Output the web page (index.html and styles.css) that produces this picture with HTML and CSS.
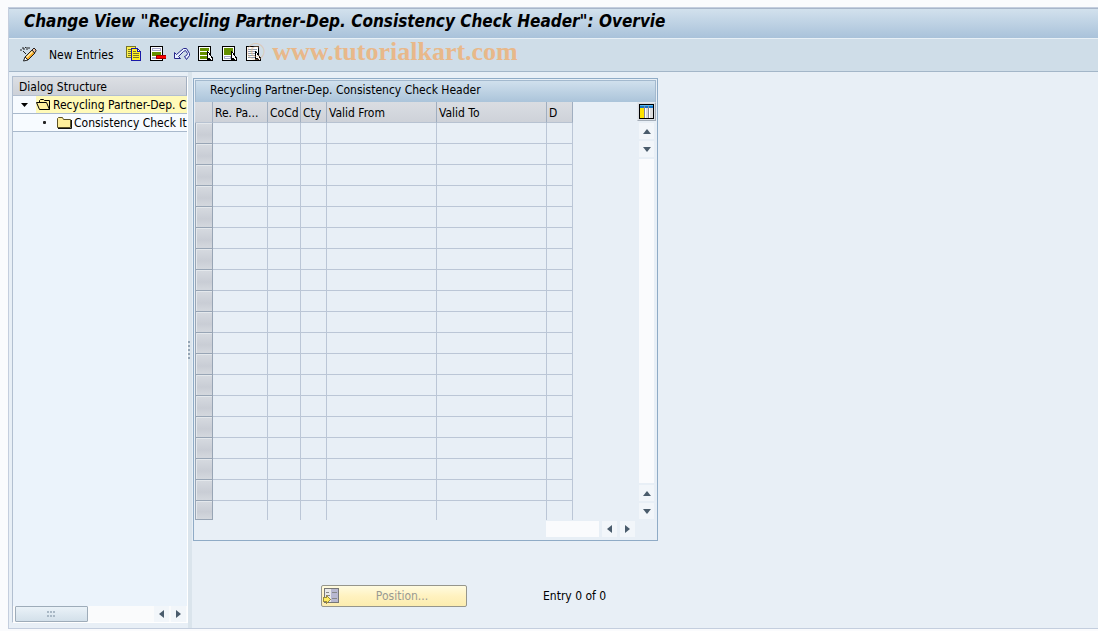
FILE: index.html
```html
<!DOCTYPE html>
<html lang="en">
<head>
  <meta charset="UTF-8">
  <meta name="viewport" content="width=device-width, initial-scale=1">
  <title>Change View</title>
  <link rel="stylesheet" href="styles.css">
</head>
<body>

<div class="window">
  <h1 class="title">Change View "Recycling Partner-Dep. Consistency Check Header": Overvie</h1>

  <div class="toolbar">
    <button type="button" class="tool" aria-label="Display / Change">
      <svg width="17" height="16" viewBox="0 0 17 16">
        <path d="M1 5V3M2 2h2v2M5 2l1-1M7 1v3M9 1v2M3 5l3 3" fill="none" stroke="#222"/>
        <path d="M5 11l7-7 3 3-7 7z" fill="#f7a823" stroke="#222"/>
        <path d="M6.500 11.500L13 5" stroke="#ffeeb0" stroke-width="1.500"/>
        <path d="M12 4l2-2 2 2v1l-1.500 2z" fill="#f4c0a0" stroke="#222"/>
        <path d="M3.500 15l1.500-4 3 3z" fill="#fff" stroke="#222"/>
      </svg>
    </button>
    <button type="button" class="tool-text">New Entries</button>
    <button type="button" class="tool" aria-label="Copy As">
      <svg width="16" height="16" viewBox="0 0 16 16" shape-rendering="crispEdges">
        <path d="M.5.5h9v11h-9z" fill="#fff14a" stroke="#77752a"/>
        <path d="M2 3.500h3M2 5.500h3M2 7.500h3M2 9.500h3" stroke="#77752a"/>
        <path d="M5.500 2.500h6l3 3v9h-9z" fill="#fff020" stroke="#1a1aa8"/>
        <path d="M11.500 2.500v3h3z" fill="#fff" stroke="#1a1aa8"/>
        <path d="M7 5.500h3M7 7.500h6M7 9.500h6M7 11.500h6" stroke="#77752a"/>
      </svg>
    </button>
    <button type="button" class="tool" aria-label="Delete">
      <svg width="16" height="16" viewBox="0 0 16 16" shape-rendering="crispEdges">
        <path d="M.5.5h12v14H.5z" fill="#fff" stroke="#000"/>
        <path d="M2.500 2.500h8v2h-8zM2.500 11.500h7v1h-7z" fill="#fff" stroke="#a8a8cc"/>
        <path d="M2 6h9v4H2z" fill="#659000"/>
        <path d="M6 9h10v4H6z" fill="#a00000"/>
        <path d="M7 10h9v2H7z" fill="#f00"/>
      </svg>
    </button>
    <button type="button" class="tool" aria-label="Undo">
      <svg width="16" height="16" viewBox="0 0 16 16">
        <path d="M.5 6.500v6h6l-2-2 5-5 2-1 2 3-1 2-2 1 2 3 3-4v-2l-3-5h-3l-7 6z" fill="#e8f0ff" stroke="#26268c"/>
      </svg>
    </button>
    <button type="button" class="tool" aria-label="Select All">
      <svg width="16" height="16" viewBox="0 0 16 16" shape-rendering="crispEdges">
        <path d="M.5.5h12v14H.5z" fill="#fff" stroke="#000"/>
        <path d="M2 2h9v3H2zM2 6h9v3H2zM2 10h9v3H2z" fill="#659000"/>
        <path d="M9.500 5.500v8l2-1 1 2h2v-2l-1-1h1z" fill="#fff" stroke="#000"/>
      </svg>
    </button>
    <button type="button" class="tool" aria-label="Select Block">
      <svg width="16" height="16" viewBox="0 0 16 16" shape-rendering="crispEdges">
        <path d="M.5.5h12v14H.5z" fill="#fff" stroke="#000"/>
        <path d="M2 2h9v7H2z" fill="#659000"/>
        <path d="M2.500 10.500h6v2h-6z" fill="#fff" stroke="#a8a8cc"/>
        <path d="M9.500 5.500v8l2-1 1 2h2v-2l-1-1h1z" fill="#fff" stroke="#000"/>
      </svg>
    </button>
    <button type="button" class="tool" aria-label="Deselect All">
      <svg width="16" height="16" viewBox="0 0 16 16" shape-rendering="crispEdges">
        <path d="M.5.5h12v14H.5z" fill="#fff" stroke="#000"/>
        <path d="M2 3.500h9M2 5.500h9M2 7.500h9M2 9.500h7M2 11.500h7" stroke="#8d9fb0"/>
        <path d="M9.500 5.500v8l2-1 1 2h2v-2l-1-1h1z" fill="#fff" stroke="#000"/>
      </svg>
    </button>
    <span class="watermark"><span class="mark">©</span> www.tutorialkart.com</span>
  </div>

  <div class="content">
    <div class="tree">
      <div class="tree-head">Dialog Structure</div>
      <div class="tree-row">
        <svg class="twisty" width="7" height="4" viewBox="0 0 7 4"><path d="M0 0h7L3.500 4z"/></svg>
        <a href="#" class="node current">
          <svg width="15" height="13" viewBox="0 0 15 13">
            <path d="M3.500 4.500V2.500l1-1h3l1 1h5v9h-10l-3-7h10l3 7" fill="#ffef9c" stroke="#000"/>
          </svg>Recycling Partner-Dep. C</a>
      </div>
      <div class="tree-row">
        <span class="dot"></span>
        <a href="#" class="node child">
          <svg width="15" height="13" viewBox="0 0 15 13">
            <path d="M.5 11.500v-9l1-1h4l1 2h7v8z" fill="#ffef9c" stroke="#5c5226"/>
            <path d="M14.500 4v8.500H1" fill="none" stroke="#111"/>
          </svg>Consistency Check It</a>
      </div>
      <div class="tree-scroll">
        <span class="thumb"><i></i><i></i><i></i><i></i><i></i><i></i></span>
        <button type="button" class="arrow" aria-label="Scroll left"><svg width="5" height="8" viewBox="0 0 5 8"><path d="M5 0v8L0 4z"/></svg></button>
        <button type="button" class="arrow" aria-label="Scroll right"><svg width="5" height="8" viewBox="0 0 5 8"><path d="M0 0v8l5-4z"/></svg></button>
      </div>
    </div>

    <div class="splitter"><i></i><i></i><i></i><i></i><i></i></div>

    <div class="main">
      <div class="panel">
        <h2>Recycling Partner-Dep. Consistency Check Header</h2>
        <div class="grid">
          <table>
            <colgroup>
              <col class="c-sel"><col class="c-part"><col class="c-co"><col class="c-cty"><col class="c-date"><col class="c-date"><col class="c-d">
            </colgroup>
            <thead>
              <tr><th></th><th>Re. Pa...</th><th>CoCd</th><th>Cty</th><th>Valid From</th><th>Valid To</th><th>D</th></tr>
            </thead>
            <tbody>
              <tr><td></td><td></td><td></td><td></td><td></td><td></td><td></td></tr>
              <tr><td></td><td></td><td></td><td></td><td></td><td></td><td></td></tr>
              <tr><td></td><td></td><td></td><td></td><td></td><td></td><td></td></tr>
              <tr><td></td><td></td><td></td><td></td><td></td><td></td><td></td></tr>
              <tr><td></td><td></td><td></td><td></td><td></td><td></td><td></td></tr>
              <tr><td></td><td></td><td></td><td></td><td></td><td></td><td></td></tr>
              <tr><td></td><td></td><td></td><td></td><td></td><td></td><td></td></tr>
              <tr><td></td><td></td><td></td><td></td><td></td><td></td><td></td></tr>
              <tr><td></td><td></td><td></td><td></td><td></td><td></td><td></td></tr>
              <tr><td></td><td></td><td></td><td></td><td></td><td></td><td></td></tr>
              <tr><td></td><td></td><td></td><td></td><td></td><td></td><td></td></tr>
              <tr><td></td><td></td><td></td><td></td><td></td><td></td><td></td></tr>
              <tr><td></td><td></td><td></td><td></td><td></td><td></td><td></td></tr>
              <tr><td></td><td></td><td></td><td></td><td></td><td></td><td></td></tr>
              <tr><td></td><td></td><td></td><td></td><td></td><td></td><td></td></tr>
              <tr><td></td><td></td><td></td><td></td><td></td><td></td><td></td></tr>
              <tr><td></td><td></td><td></td><td></td><td></td><td></td><td></td></tr>
              <tr><td></td><td></td><td></td><td></td><td></td><td></td><td></td></tr>
              <tr><td></td><td></td><td></td><td></td><td></td><td></td><td></td></tr>
            </tbody>
          </table>
          <div class="vscroll">
            <button type="button" class="config" aria-label="Configuration">
              <svg width="15" height="15" viewBox="0 0 15 15" shape-rendering="crispEdges">
                <path d="M0 0h15v15H0z"/>
                <path d="M1 1h13v13H1z" fill="#fff"/>
                <path d="M1 1h13v3H1z" fill="#1874c8"/>
                <path d="M1 1h13v1H1z" fill="#58b8f0"/>
                <path d="M1 4h4v10H1z" fill="#ffe400"/>
                <path d="M7 4h2v10H7zM11 4h3v10h-3z" fill="#dcdcdc"/>
                <path d="M5 2h1v12H5zM9 2h1v12H9z" fill="#889"/>
              </svg>
            </button>
            <button type="button" class="arrow" aria-label="Top"><svg width="8" height="5" viewBox="0 0 8 5"><path d="M0 5h8L4 0z"/></svg></button>
            <button type="button" class="arrow" aria-label="Down"><svg width="8" height="5" viewBox="0 0 8 5"><path d="M0 0h8L4 5z"/></svg></button>
            <span class="track"></span>
            <button type="button" class="arrow" aria-label="Up"><svg width="8" height="5" viewBox="0 0 8 5"><path d="M0 5h8L4 0z"/></svg></button>
            <button type="button" class="arrow" aria-label="Bottom"><svg width="8" height="5" viewBox="0 0 8 5"><path d="M0 0h8L4 5z"/></svg></button>
          </div>
        </div>
        <div class="hscroll">
          <span class="track"></span>
          <button type="button" class="arrow" aria-label="Left"><svg width="5" height="8" viewBox="0 0 5 8"><path d="M5 0v8L0 4z"/></svg></button>
          <button type="button" class="arrow" aria-label="Right"><svg width="5" height="8" viewBox="0 0 5 8"><path d="M0 0v8l5-4z"/></svg></button>
        </div>
      </div>

      <div class="footer">
        <button type="button" class="position" disabled>
          <svg width="16" height="16" viewBox="0 0 16 16" shape-rendering="crispEdges">
            <path d="M1.500.5h14v14h-14z" fill="#e8e8e8" stroke="#777"/>
            <path d="M8 1h7v13H8z" fill="#b8b8d0"/>
            <path d="M3 4.500h3M4 7.500h3M9 4.500h5M9 10.500h5" stroke="#888"/>
            <path d="M.5 9.500h3v-2l4 4-4 4v-2h-3z" fill="#ffec60" stroke="#998b40"/>
          </svg>
          <span>Position...</span>
        </button>
        <span class="entry">Entry 0 of 0</span>
      </div>
    </div>
  </div>
</div>

</body>
</html>
```
FILE: styles.css
```css
* { box-sizing: border-box; }
body {
  margin: 0;
  padding: 7px 0 2px 8px;
  min-height: 100vh;
  display: flex;
  flex-direction: column;
  background: #fafbfd;
  color: #000;
  font-family: Tahoma, "DejaVu Sans Condensed", "DejaVu Sans", sans-serif;
  font-size: 12px;
}
button {
  margin: 0;
  padding: 0;
  border: 0;
  background: none;
  font: inherit;
  color: inherit;
}
svg { display: block; flex: none; }

.window {
  flex: 1;
  display: flex;
  flex-direction: column;
  background: #e8eff6;
  border: 1px solid #c4cede;
  border-right: 0;
}
.title {
  margin: 0;
  height: 31px;
  padding-left: 15px;
  border-top: 1px solid #a8b6ca;
  border-bottom: 1px solid #e8f0f6;
  background: linear-gradient(#d2e1ed, #a9c2da);
  font-size: 17px;
  line-height: 25px;
  font-style: italic;
  white-space: nowrap;
  overflow: hidden;
}
.toolbar {
  position: relative;
  display: flex;
  align-items: center;
  gap: 8px;
  height: 33px;
  padding: 0 0 2px 11px;
  background: #cfdde8;
  border-bottom: 1px solid #a3b6c8;
}
.tool-text { margin: 0 4px; padding-top: 1px; }
.watermark {
  position: absolute;
  left: 237px;
  top: 0;
  color: #e8b88a;
  font: bold 26px/26px "Liberation Serif", serif;
  white-space: nowrap;
  pointer-events: none;
}
.mark { font-weight: normal; opacity: 0.5; }

.content { flex: 1; display: flex; }

/* left tree */
.tree {
  width: 176px;
  margin: 4px 0 5px 3px;
  display: flex;
  flex-direction: column;
  background: #ebf3fb;
  border: 1px solid #b2bfd0;
  border-right-color: #fff;
  border-bottom-color: #fff;
}
.tree-head {
  height: 19px;
  padding-left: 6px;
  line-height: 20px;
  background: linear-gradient(#dcdfe4, #cdd1d8);
  border-right: 1px solid #a3afc0;
  border-bottom: 1px solid #b2bfd0;
}
.tree-row {
  display: flex;
  align-items: center;
  height: 18px;
  background: #f7fbff;
  border-bottom: 1px solid #a9b9cc;
  overflow: hidden;
}
.twisty { margin: 0 8px; }
.dot {
  flex: none;
  width: 3px;
  height: 3px;
  margin: 0 9px 0 30px;
  border-radius: 1px;
  background: #222;
}
.node {
  flex: 1;
  display: flex;
  align-items: center;
  gap: 2px;
  height: 17px;
  color: #000;
  text-decoration: none;
  white-space: nowrap;
}
.child { padding-left: 2px; }
.current { background: #fffab8; }
.tree-scroll {
  display: flex;
  gap: 2px;
  height: 16px;
  margin-top: auto;
  padding: 0 1px 0 2px;
  background: #fafbfc;
}
.thumb {
  width: 73px;
  height: 16px;
  margin-right: auto;
  padding: 4px 31px;
  display: grid;
  grid-template-columns: repeat(3, 2px);
  gap: 1px;
  background: linear-gradient(#eaf2f8, #d3e0ea);
  border: 1px solid #9eacb9;
  border-radius: 1px;
}
.thumb i { width: 2px; height: 2px; background: #a9b8c5; }
.arrow {
  display: flex;
  align-items: center;
  justify-content: center;
  width: 15px;
  height: 16px;
  background: #f2f6fa;
}
.arrow svg { fill: #4a5c6c; }

.splitter {
  display: flex;
  flex-direction: column;
  justify-content: center;
  gap: 2px;
  width: 4px;
  background: #dae4ec;
}
.splitter i { width: 2px; height: 2px; background: #94a4b4; }

/* table control */
.main { flex: 1; padding: 6px 0 0 1px; }
.panel {
  width: 465px;
  padding: 1px;
  border: 1px solid #8fabc6;
}
.panel h2 {
  margin: 0;
  height: 22px;
  padding-left: 14px;
  border: 1px solid #a3b9ce;
  border-bottom: 0;
  background: linear-gradient(#d0e0ed, #abc4da);
  font-size: 12px;
  font-weight: normal;
  line-height: 18px;
}
.grid { display: flex; justify-content: space-between; }
table {
  width: 378px;
  table-layout: fixed;
  border-collapse: separate;
  border-spacing: 0;
}
.c-sel { width: 18px; }
.c-part { width: 55px; }
.c-co { width: 33px; }
.c-cty { width: 26px; }
.c-date { width: 110px; }
.c-d { width: 26px; }
th {
  height: 21px;
  padding: 2px 0 0 2px;
  background: linear-gradient(#dadde2, #ced2d9);
  border-right: 1px solid #a0aec0;
  border-bottom: 1px solid #b7c2d1;
  font-weight: normal;
  text-align: left;
  white-space: nowrap;
}
td {
  height: 21px;
  padding: 0;
  border-right: 1px solid #bbc6d6;
  border-bottom: 1px solid #bbc6d6;
}
td:first-child {
  background: linear-gradient(#d6dae0, #c9cdd5 60%, #d4d8de);
  border-left: 1px solid #a0acba;
  border-color: #98a5b5;
  box-shadow: inset 1px 1px #e4e8ec;
}
tr:last-child td { height: 19px; border-bottom: 0; }
tr:last-child td:first-child { border-bottom: 1px solid #98a5b5; }
.vscroll {
  display: flex;
  flex-direction: column;
  align-items: center;
  gap: 2px;
  padding-bottom: 1px;
}
.config {
  display: flex;
  align-items: center;
  justify-content: center;
  width: 19px;
  height: 19px;
  border: 1px solid #e4e8ec;
  border-right-color: #a3adb8;
  border-bottom-color: #a3adb8;
  background: #d8dce2;
}
.track { background: #fafbfd; }
.vscroll .track { flex: 1; width: 15px; }
.hscroll {
  display: flex;
  justify-content: flex-end;
  gap: 3px;
  padding: 1px 21px 2px 0;
}
.hscroll .track { width: 53px; }

.footer {
  display: flex;
  align-items: center;
  gap: 76px;
  padding: 44px 0 0 128px;
}
.position {
  display: flex;
  align-items: center;
  width: 146px;
  height: 22px;
  padding: 0 1px;
  color: #999a93;
  background: linear-gradient(#fffbe0, #fff2c0 50%, #fcedaf);
  border: 1px solid #96968c;
  border-radius: 2px;
}
.position span { flex: 1; text-align: center; }
```
